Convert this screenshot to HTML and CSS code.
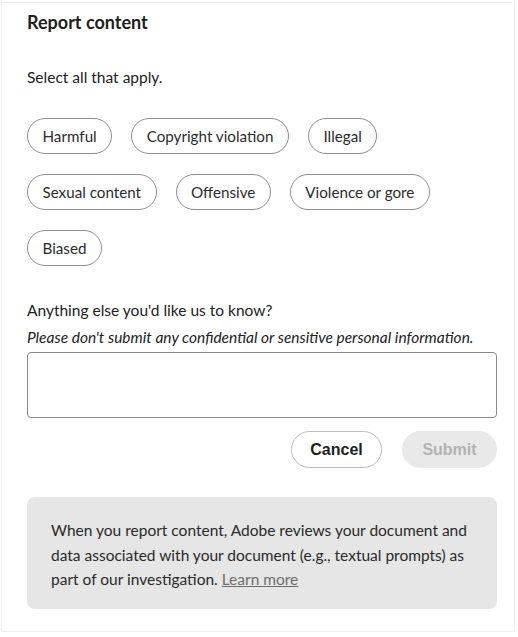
FILE: index.html
```html
<!DOCTYPE html>
<html>
<head>
<meta charset="utf-8">
<link rel="stylesheet" href="styles.css">
</head>
<body>
<div class="panel">
  <h1 class="title">Report content</h1>
  <p class="lead">Select all that apply.</p>
  <div class="chips">
    <button class="chip">Harmful</button>
    <button class="chip">Copyright violation</button>
    <button class="chip">Illegal</button>
    <button class="chip">Sexual content</button>
    <button class="chip">Offensive</button>
    <button class="chip">Violence or gore</button>
    <button class="chip">Biased</button>
  </div>
  <p class="question">Anything else you'd like us to know?</p>
  <p class="note">Please don't submit any confidential or sensitive personal information.</p>
  <textarea class="field"></textarea>
  <div class="actions">
    <button class="btn cancel">Cancel</button>
    <button class="btn submit" disabled>Submit</button>
  </div>
  <div class="info">
    When you report content, Adobe reviews your document and data associated with your document (e.g., textual prompts) as part of our investigation. <a href="#" class="link">Learn more</a>
  </div>
</div>
</body>
</html>
```
FILE: styles.css
```css
* { box-sizing: border-box; }
html, body { margin: 0; padding: 0; background: #ffffff; }
body {
  font-family: Lato, "Noto Sans", sans-serif;
  color: #222;
  padding: 2px 3px 5px 1px;
}
.panel {
  border: 1px solid #f0f0f0;
  height: 630px;
  padding: 9px 20px 0 25px;
  background: #fff;
}
.title {
  margin: 0;
  font-size: 18px;
  font-weight: 700;
  line-height: 20px;
  color: #1e1e1e;
}
.lead {
  margin: 35px 0 0;
  font-size: 15.5px;
  line-height: 20px;
}
.chips {
  margin-top: 31px;
  display: flex;
  flex-wrap: wrap;
  column-gap: 19px;
  row-gap: 20px;
  width: 450px;
}
.chip {
  font-family: Lato, "Noto Sans", sans-serif;
  font-size: 15.2px;
  color: #2c2c2c;
  background: #fff;
  border: 1.5px solid #8e8e8e;
  border-radius: 18px;
  height: 36px;
  padding: 0 14.5px;
}
.question {
  margin: 34px 0 0;
  font-size: 15.5px;
  line-height: 20px;
}
.note {
  margin: 7px 0 0;
  font-size: 15.5px;
  font-style: italic;
  line-height: 20px;
}
.field {
  display: block;
  margin-top: 5px;
  width: 470px;
  height: 66px;
  border: 1.5px solid #8a8a8a;
  border-radius: 4px;
  resize: none;
}
.actions {
  margin-top: 13px;
  display: flex;
  justify-content: flex-end;
  gap: 20px;
  width: 470px;
}
.btn {
  font-family: "Liberation Sans", Arial, sans-serif;
  font-weight: 700;
  font-size: 16px;
  height: 37px;
  border-radius: 19px;
  padding: 0;
}
.cancel {
  width: 91px;
  background: #fff;
  color: #1e1e1e;
  border: 1.5px solid #bdbdbd;
}
.submit {
  width: 95px;
  background: #e9e9e9;
  color: #b3b3b3;
  border: none;
}
.info {
  margin-top: 29px;
  width: 470px;
  background: #e6e6e6;
  border-radius: 8px;
  padding: 21px 24px 17px;
  font-size: 15.5px;
  line-height: 24.5px;
  color: #2a2a2a;
}
.link {
  color: #6e6e6e;
  text-decoration: underline;
}
```
